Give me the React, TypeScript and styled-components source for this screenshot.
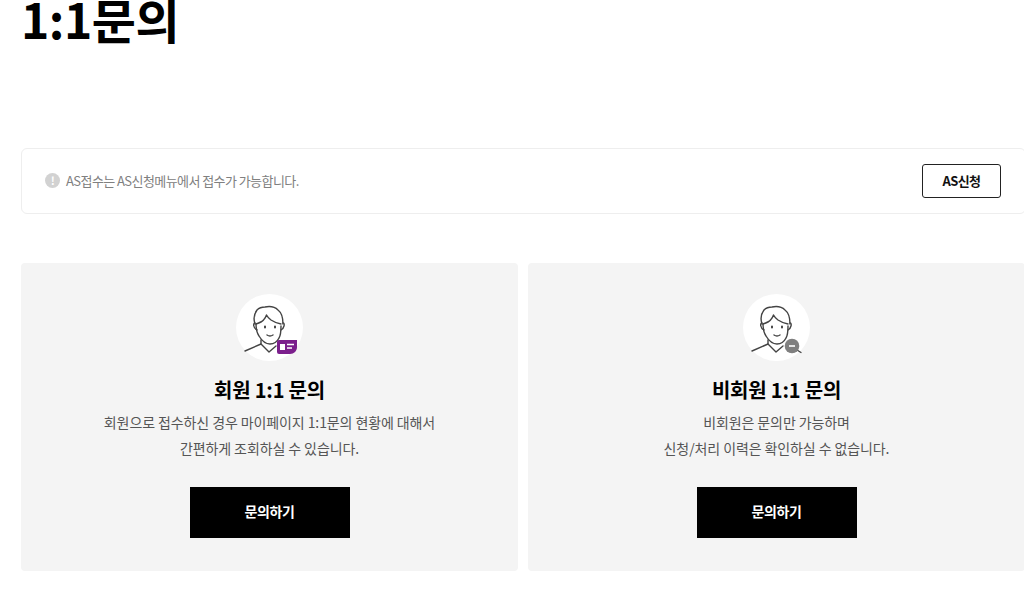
import React from "react";
import styled, { createGlobalStyle } from "styled-components";

const GlobalStyle = createGlobalStyle`
  html, body {
    margin: 0;
    padding: 0;
    height: 601px;
    overflow: hidden;
    background: #fff;
    font-family: "Noto Sans CJK KR", "Noto Sans", sans-serif;
  }
`;

const Page = styled.div`
  width: 1003px;
  height: 601px;
  margin-left: 21px;
`;

const Title = styled.h1`
  margin: -17px 0 0 0;
  height: 165px;
  font-size: 48px;
  line-height: 70px;
  font-weight: 700;
  letter-spacing: -0.5px;
  color: #000;
`;

const Notice = styled.div`
  box-sizing: border-box;
  width: 1005px;
  height: 66px;
  display: flex;
  align-items: center;
  justify-content: space-between;
  padding: 0 24px 0 23px;
  border: 1px solid #eeeeee;
  border-radius: 6px;
  background: #fff;
`;

const NoticeText = styled.p`
  display: flex;
  align-items: center;
  gap: 6px;
  margin: 0 0 2px;
  font-size: 13px;
  letter-spacing: -0.57px;
  color: #808080;
`;

const AlertDot = styled.span`
  width: 15px;
  height: 15px;
  border-radius: 50%;
  background: #d2d2d2;
  color: #fff;
  font-size: 11px;
  font-weight: 700;
  line-height: 15px;
  text-align: center;
`;

const OutlineButton = styled.button`
  box-sizing: border-box;
  width: 79px;
  height: 34px;
  padding: 0 0 1px;
  border: 1px solid #222;
  border-radius: 3px;
  background: #fff;
  color: #111;
  font-family: inherit;
  font-size: 13px;
  font-weight: 700;
  letter-spacing: -0.6px;
`;

const Cards = styled.div`
  display: grid;
  grid-template-columns: 497px 497px;
  gap: 10px;
  margin-top: 49px;
`;

const Card = styled.section`
  box-sizing: border-box;
  height: 308px;
  padding-top: 31px;
  display: flex;
  flex-direction: column;
  align-items: center;
  background: #f4f4f4;
  border-radius: 4px;
`;

const Avatar = styled.div`
  width: 67px;
  height: 67px;
  border-radius: 50%;
  background: #fff;
  svg {
    display: block;
  }
`;

const CardTitle = styled.h2`
  margin: 15px 0 0;
  font-size: 20px;
  line-height: 28px;
  font-weight: 700;
  letter-spacing: -0.2px;
  color: #000;
`;

const CardText = styled.p`
  margin: 6px 0 0;
  font-size: 14px;
  line-height: 25.5px;
  letter-spacing: -0.1px;
  text-align: center;
  color: #555;
`;

const SolidButton = styled.button`
  width: 160px;
  height: 51px;
  margin-top: 26px;
  padding: 0 0 3px;
  border: 0;
  background: #000;
  color: #fff;
  font-family: inherit;
  font-size: 14px;
  font-weight: 700;
  letter-spacing: -0.4px;
`;

const PersonIcon = ({ badge }: { badge: "member" | "guest" }) => (
  <svg width="67" height="67" viewBox="0 0 67 67" fill="none">
    <g stroke="#444" strokeWidth="1.4" strokeLinecap="round" strokeLinejoin="round">
      {/* hair */}
      <path d="M19 30c-2-6-1-10 2-14 2-2 5-3 8-3 5-1 10 0 13 3 4 3 5 8 5 14" />
      <path d="M20 30c3-1 6-2 7.500-4 1.500-1.500 2.500-3.500 3-5 1 2 2.500 3.500 4.500 5 3 2 7 3.500 10 4" />
      {/* ears + face */}
      <path d="M19 29c-2 0-2 5 2 7M47 29c2 0 1.500 5-2 7" />
      <path d="M20 30c0 5 1 9 3 12 3 5 7 8 11 8s7-2 9-6c2-3 2-7 2-12" />
      {/* eyes and mouth */}
      <path d="M29 32.500v1M39 32.500v1" strokeWidth="2" />
      <path d="M31 41c2 1.300 4 1.300 6 0" />
      {/* neck + shoulders */}
      <path d="M25 46v4L9 57" />
      <path d="M25 50l8 8 7-6" />
    </g>
    {badge === "member" ? (
      <g>
        <path d="M43 46h18v7c0 4-3 7-7 7H43a2 2 0 0 1-2-2V48a2 2 0 0 1 2-2z" fill="#7b1f8c" />
        <rect x="44" y="50" width="5" height="6" fill="#fff" />
        <path d="M51 50.500h7M51 54h5" stroke="#fff" strokeWidth="1.300" />
      </g>
    ) : (
      <g>
        <path d="M54 56l4 2.500" stroke="#444" strokeWidth="1.400" strokeLinecap="round" />
        <circle cx="49" cy="52" r="7.300" fill="#7f7f7f" />
        <path d="M46 52h6" stroke="#fff" strokeWidth="1.600" />
      </g>
    )}
  </svg>
);

const App = () => (
  <>
    <GlobalStyle />
    <Page>
      <Title>1:1문의</Title>
      <Notice>
        <NoticeText>
          <AlertDot>!</AlertDot>
          AS접수는 AS신청메뉴에서 접수가 가능합니다.
        </NoticeText>
        <OutlineButton type="button">AS신청</OutlineButton>
      </Notice>
      <Cards>
        <Card>
          <Avatar>
            <PersonIcon badge="member" />
          </Avatar>
          <CardTitle>회원 1:1 문의</CardTitle>
          <CardText>
            회원으로 접수하신 경우 마이페이지 1:1문의 현황에 대해서
            <br />
            간편하게 조회하실 수 있습니다.
          </CardText>
          <SolidButton type="button">문의하기</SolidButton>
        </Card>
        <Card>
          <Avatar>
            <PersonIcon badge="guest" />
          </Avatar>
          <CardTitle>비회원 1:1 문의</CardTitle>
          <CardText>
            비회원은 문의만 가능하며
            <br />
            신청/처리 이력은 확인하실 수 없습니다.
          </CardText>
          <SolidButton type="button">문의하기</SolidButton>
        </Card>
      </Cards>
    </Page>
  </>
);

export default App;
